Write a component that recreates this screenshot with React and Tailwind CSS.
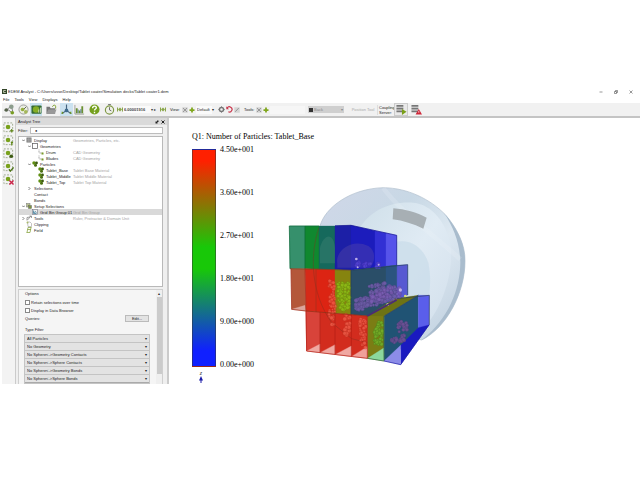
import { useState } from "react";

const MENUS = ["File", "Tools", "View", "Displays", "Help"];

const TREE = [
  { level: 0, label: "Display", note: "Geometries, Particles, etc.", icon: "grid", arrow: "open" },
  { level: 1, label: "Geometries", icon: "box", arrow: "open" },
  { level: 2, label: "Drum", note: "CAD Geometry", icon: "cad" },
  { level: 2, label: "Blades", note: "CAD Geometry", icon: "cad" },
  { level: 1, label: "Particles", icon: "particle", arrow: "open" },
  { level: 2, label: "Tablet_Base", note: "Tablet Base Material", icon: "particle" },
  { level: 2, label: "Tablet_Middle", note: "Tablet Middle Material", icon: "particle" },
  { level: 2, label: "Tablet_Top", note: "Tablet Top Material", icon: "particle" },
  { level: 1, label: "Selections", arrow: "closed" },
  { level: 1, label: "Contact" },
  { level: 1, label: "Bonds" },
  { level: 0, label: "Setup Selections", icon: "setup", arrow: "open" },
  { level: 1, label: "Grid Bin Group 01", note: "Grid Bin Group", icon: "bin", selected: true },
  { level: 0, label: "Tools", note: "Ruler, Protractor & Domain Unit", icon: "tools", arrow: "closed" },
  { level: 0, label: "Clipping", icon: "clip" },
  { level: 0, label: "Field", icon: "field" },
];

const INDENT = ["pl-px", "pl-[7px]", "pl-[13px]"];

const FILTERS = [
  "All Particles",
  "No Geometry",
  "No Sphere<->Geometry Contacts",
  "No Sphere<->Sphere Contacts",
  "No Sphere<->Geometry Bonds",
  "No Sphere<->Sphere Bonds",
];

const SCALE = ["4.50e+001", "3.60e+001", "2.70e+001", "1.80e+001", "9.00e+000", "0.00e+000"];

function TreeIcon({ name }) {
  return (
    <svg viewBox="0 0 12 12" className="size-[6px] shrink-0" fill="none" aria-hidden="true">
      {name === "grid" && (
        <>
          <rect x="1" y="1" width="10" height="10" fill="#777" />
          <path d="M1 4.5h10M1 8h10M4.5 1v10M8 1v10" stroke="#bbb" />
        </>
      )}
      {name === "box" && <rect x="1" y="1" width="10" height="10" stroke="#555" strokeWidth="1.4" />}
      {name === "cad" && (
        <>
          <path d="M2 1v7h7" stroke="#888" strokeWidth="1.4" strokeDasharray="2 1" />
          <rect x="7" y="7" width="4" height="4" fill="#7a9a2a" />
        </>
      )}
      {name === "particle" && (
        <>
          <circle cx="4" cy="4" r="3.5" fill="#5f8f10" />
          <circle cx="9" cy="4" r="2.8" fill="#3c5a10" />
          <circle cx="7" cy="8.5" r="3" fill="#4c7010" />
        </>
      )}
      {name === "setup" && (
        <>
          <rect x="1" y="1" width="7" height="7" fill="#b8c090" stroke="#777" />
          <rect x="5" y="5" width="6" height="6" fill="#7c9440" stroke="#666" />
        </>
      )}
      {name === "bin" && (
        <>
          <rect x="1" y="1" width="10" height="10" fill="#eee" stroke="#667" />
          <path d="M3 3v6h6M4 8l2-3 3 2" stroke="#2a7090" strokeWidth="1.4" />
        </>
      )}
      {name === "tools" && <path d="M2 11V5l6-1M3 10l7-8M7 2h4v4" stroke="#777" strokeWidth="1.4" />}
      {name === "clip" && (
        <>
          <path d="M3 2h5l3 3v6H4z" stroke="#888" />
          <circle cx="3" cy="3" r="2" fill="#a9b96a" />
        </>
      )}
      {name === "field" && <path d="M4 1h7M3 5h7M1 11h7M4 1L2 11M10 1L8 11" stroke="#86a23c" strokeWidth="1.5" />}
    </svg>
  );
}

function TreeRow({ item }) {
  return (
    <li className={item.selected ? "bg-[#d9d9d9]" : ""}>
      <div className="grid h-[6px] grid-cols-[54px_1fr] items-center">
        <span className={`flex items-center whitespace-nowrap ${INDENT[item.level]}`}>
          <span className="flex w-[6px] justify-center">
            {item.arrow && (
              <svg viewBox="0 0 6 6" className="size-[3px]" fill="none" stroke="#555" strokeWidth="1.5">
                <path d={item.arrow === "open" ? "M0 1l3 3 3-3" : "M1 0l3 3-3 3"} />
              </svg>
            )}
          </span>
          {item.icon && <TreeIcon name={item.icon} />}
          <span className="pl-[2px]">{item.label}</span>
        </span>
        <span className="whitespace-nowrap text-[#a3a3a3]">{item.note}</span>
      </div>
    </li>
  );
}

function IconButton({ label, className, size = "size-[11px]", children }) {
  return (
    <button type="button" aria-label={label} className={`flex h-[13px] shrink-0 items-center justify-center ${className}`}>
      <svg viewBox="0 0 24 24" className={size} fill="none">
        {children}
      </svg>
    </button>
  );
}

function ViewIcons({ name }) {
  return (
    <>
      <IconButton label={`Hide ${name}`} className="w-[7px]" size="size-[6px]">
        <rect x="1" y="1" width="22" height="22" fill="#d4d4d4" />
        <path d="M4 4l16 16M20 4L4 20" stroke="#999" strokeWidth="4" />
      </IconButton>
      <IconButton label={`Add ${name}`} className="w-[7px]" size="size-[6px]">
        <path d="M12 2v20M2 12h20" stroke="#7fa61c" strokeWidth="7" />
      </IconButton>
    </>
  );
}

function ServerIcon() {
  return (
    <>
      <path d="M1 2h15v4H1zM1 8h15v4H1zM1 14h15v4H1z" fill="#777" />
      <path d="M1 7h15M1 13h15" stroke="#aaa" />
    </>
  );
}

function FilmIcon() {
  return (
    <svg viewBox="0 0 12 10" className="h-[5px] w-[6px] shrink-0" aria-hidden="true">
      <path d="M0 1h2v8H0zM10 1h2v8h-2zM2 5l4-4v8zM10 5L6 1v8z" fill="#8aa64a" />
    </svg>
  );
}

function Toolbar() {
  return (
    <div className="flex h-[15px] items-center overflow-hidden border-b-2 border-[#c4c4c4] bg-[#f1f1f1]">
      <IconButton label="Creator" className="w-[14px]">
        <path d="M1 14l6-3 8 6M9 10l7-6 3 12" stroke="#777" strokeWidth="2" />
        <circle cx="16" cy="6" r="5" fill="#8c9c8c" />
        <circle cx="5" cy="13" r="4" fill="#55624a" />
        <circle cx="18" cy="19" r="4" fill="#789c24" />
      </IconButton>
      <IconButton label="Simulator" className="w-[14px]">
        <circle cx="12" cy="12" r="10" fill="#e9ecdf" stroke="#999" strokeWidth="2" />
        <path d="M12 12l6-6" stroke="#555" strokeWidth="2" />
        <circle cx="10" cy="12" r="4" fill="#93ad3c" />
        <circle cx="17" cy="17" r="4" fill="#a5b85a" />
      </IconButton>
      <IconButton label="Analyst" className="w-[12px] bg-[#c7e0ee]">
        <rect x="1" y="3" width="22" height="18" rx="2" fill="#356b32" />
        <circle cx="11" cy="12" r="7" fill="#83ad25" />
        <path d="M17 19V12M21 19V8" stroke="#dce7c6" strokeWidth="2" />
      </IconButton>
      <IconButton label="Open" className="w-[18px]">
        <path d="M1 21V6h7l2 3h10v12z" fill="#777" />
        <path d="M1 21l4-9h18l-4 9z" fill="#999" />
        <path d="M14 6c2-5 7-4 7-1v5" stroke="#7b9d25" strokeWidth="2" />
      </IconButton>
      <IconButton label="Vectors" className="w-[13px] bg-[#cce2f0]">
        <path d="M12 14V1M12 14L2 21M12 14l10 7" stroke="#46637d" strokeWidth="2.5" />
        <circle cx="12" cy="14" r="4" fill="#3f6a8c" />
        <path d="M1 22l1-6 4 4zM23 22l-1-6-4 4z" fill="#6b9418" />
      </IconButton>
      <IconButton label="Graphs" className="w-[13px]">
        <path d="M2 2v20h20" stroke="#999" strokeWidth="2" />
        <path d="M6 20V9M12 20V14M18 20V5" stroke="#6c9132" strokeWidth="4" />
        <path d="M9 20v-8M15 20v-9" stroke="#527b91" strokeWidth="2" />
      </IconButton>
      <IconButton label="Help" className="w-[16px]">
        <circle cx="12" cy="12" r="11" fill="#74a01d" />
        <path d="M8 9c0-6 8-5 8-1 0 3-4 3-4 6M12 17v3" stroke="#fff" strokeWidth="3" />
      </IconButton>
      <IconButton label="Timer" className="w-[15px]">
        <circle cx="12" cy="13" r="9" fill="#eef0e7" stroke="#7e9743" strokeWidth="2.5" />
        <path d="M12 13V7M9 1h6M12 13l4 2" stroke="#666" strokeWidth="2" />
      </IconButton>
      <div className="flex w-[43px] shrink-0 items-center">
        <FilmIcon />
        <input
          aria-label="Time"
          defaultValue="6.00001916"
          className="h-[7px] w-[28px] bg-[#fafafa] px-px font-bold text-[#444]"
        />
        <span className="whitespace-nowrap text-[#333]">▾ ▸</span>
      </div>
      <FilmIcon />
      <span className="ml-[4px] w-[11px] shrink-0">View:</span>
      <ViewIcons name="view" />
      <select aria-label="View" className="ml-px h-[8px] w-[16px] shrink-0 appearance-none bg-[#fafafa] px-px">
        <option>Default</option>
      </select>
      <span className="w-[6px] shrink-0">▾</span>
      <IconButton label="View settings" className="w-[7px]" size="size-[7px]">
        <circle cx="12" cy="12" r="7" stroke="#777" strokeWidth="5" />
        <path d="M12 1v5M12 18v5M1 12h5M18 12h5" stroke="#777" strokeWidth="3" />
      </IconButton>
      <IconButton label="Reset view" className="w-[8px]" size="size-[7px]">
        <path d="M4 7a9 9 0 1 1 4 13" stroke="#c8344a" strokeWidth="4" />
        <path d="M1 1v10h9z" fill="#c8344a" />
      </IconButton>
      <IconButton label="Edit view" className="w-[8px]" size="size-[6px]">
        <rect x="1" y="1" width="22" height="22" fill="#d5d5d5" />
        <path d="M5 19L19 4" stroke="#999" strokeWidth="4" />
      </IconButton>
      <span className="ml-[3px] w-[11px] shrink-0">Tools:</span>
      <ViewIcons name="tool" />
      <select aria-label="Tool" className="ml-px h-[8px] w-[35px] shrink-0 appearance-none bg-[#f6f6f6]">
        <option></option>
      </select>
      <div className="ml-[3px] flex h-[7px] w-[36px] shrink-0 items-center bg-[#cfcfcf] px-px text-[#888]">
        <span className="size-[4px] bg-[#333]"></span>
        <select aria-label="Plane" className="h-[6px] grow appearance-none px-px">
          <option>Back</option>
        </select>
        <span>▾</span>
      </div>
      <button type="button" className="ml-[7px] w-[24px] shrink-0 whitespace-nowrap text-[#aaa]">
        Position Tool
      </button>
      <p className="ml-[2px] w-[17px] shrink-0 border-l border-[#ddd] pl-px">Coupling Server:</p>
      <IconButton label="Start coupling server" className="w-[14px] border border-[#ccc] bg-[#e9e9e9]">
        <ServerIcon />
        <path d="M13 11l10 6-10 7z" fill="#7aa018" />
      </IconButton>
      <IconButton label="Coupling error" className="ml-[2px] w-[13px]">
        <ServerIcon />
        <path d="M17 11l7 12H10z" fill="#cf2638" />
        <path d="M17 15v4" stroke="#fff" strokeWidth="1.5" />
      </IconButton>
    </div>
  );
}

function SideTools() {
  const extras = [
    <path key="a" d="M19 15v8M15 19h8" stroke="#5f8718" strokeWidth="2.5" />,
    <path key="b" d="M19 14v9M17 16h5" stroke="#5f8718" strokeWidth="2.5" />,
    <circle key="c" cx="18" cy="18" r="4" fill="#3d5b13" />,
    <path key="d" d="M13 18l3 4 7-8" stroke="#4c7316" strokeWidth="3" />,
    <path key="e" d="M14 14l9 9M23 14l-9 9" stroke="#cc2348" strokeWidth="3" />,
  ];
  const names = ["Add selection", "Insert selection", "Select particles", "Apply selection", "Delete selection"];
  return (
    <aside className="w-[13px] shrink-0 bg-[#f3f3f3] pt-[3px]">
      {names.map((name, i) => (
        <IconButton key={name} label={name} className="w-[12px]">
          <rect x="2" y="2" width="19" height="19" stroke="#9aa68a" strokeWidth="2" strokeDasharray="4 3" />
          <circle cx="11" cy="11" r="5" fill="#79a21c" />
          {extras[i]}
        </IconButton>
      ))}
    </aside>
  );
}

function CheckRow({ label }) {
  const [checked, setChecked] = useState(false);
  return (
    <label className="flex h-[8px] items-center gap-px">
      <input
        type="checkbox"
        checked={checked}
        onChange={(e) => setChecked(e.target.checked)}
        className="size-[5px] appearance-none border border-[#888] bg-white checked:bg-[#555]"
      />
      {label}
    </label>
  );
}

function OptionsPanel() {
  return (
    <div className="mt-[2px] flex h-[95px] border border-b-0 border-[#cfcfcf] bg-[#f5f5f5]">
      <div className="grow pl-[6px]">
        <h2 className="h-[8px] leading-[8px]">Options</h2>
        <CheckRow label="Retain selections over time" />
        <CheckRow label="Display in Data Browser" />
        <div className="flex h-[8px] items-center justify-between pr-[7px]">
          <span>Queries:</span>
          <button type="button" className="h-[7px] w-[24px] border border-[#bbb] bg-[#e3e3e3]">
            Edit...
          </button>
        </div>
        <h2 className="mt-[4px] mb-px h-[8px] leading-[8px]">Type Filter</h2>
        <div className="flex flex-col pr-[7px]">
          {FILTERS.map((f) => (
            <div key={f} className="flex h-[8px] items-center border-b border-[#aaa] bg-[#e3e3e3] pr-[2px] shadow-[0_0_0_1px_#c4c4c4]">
              <select aria-label={f} className="h-[7px] grow appearance-none px-[2px]">
                <option>{f}</option>
              </select>
              <span>▾</span>
            </div>
          ))}
        </div>
      </div>
      <div className="flex w-[6px] flex-col items-center bg-[#efefef]">
        <span className="h-[7px] leading-[7px]">▴</span>
        <span className="h-[77px] w-[5px] bg-[#cbcbcb]"></span>
      </div>
    </div>
  );
}

function AnalystDock() {
  return (
    <section className="flex w-[154px] shrink-0 flex-col border-r-2 border-l border-[#cbcbcb] bg-[#efefef]">
      <header className="flex h-[7px] items-center justify-between bg-[#dadada] px-[2px]">
        <h1>Analyst Tree</h1>
        <span className="flex gap-[2px]">
          <button type="button" aria-label="Float">
            <svg viewBox="0 0 8 8" className="size-[4px]"><path d="M1 3h4v4H1zM4 1h3v3H4z" fill="#222" /></svg>
          </button>
          <button type="button" aria-label="Close">
            <svg viewBox="0 0 8 8" className="size-[4px]"><path d="M1 1l6 6M7 1L1 7" stroke="#222" strokeWidth="2" /></svg>
          </button>
        </span>
      </header>
      <div className="px-[2px] pr-[4px]">
        <label className="flex h-[11px] items-center gap-[2px]">
          <span className="w-[10px]">Filter:</span>
          <input defaultValue="●" className="h-[7px] w-0 grow border border-[#bdbdbd] bg-white px-[4px]" />
        </label>
        <ul className="h-[151px] border border-[#b9b9b9] bg-white">
          {TREE.map((item) => (
            <TreeRow key={item.label} item={item} />
          ))}
        </ul>
        <OptionsPanel />
      </div>
    </section>
  );
}

// repeatable scatter, so the cloud of tablets keeps its shape between renders
function scatter(count, x, y, w, h, slope, seed) {
  let s = seed;
  const next = () => {
    s = (s * 16807) % 2147483647;
    return s / 2147483647;
  };
  return Array.from({ length: count }, () => {
    const u = next();
    return { x: x + u * w, y: y + next() * h + u * slope, r: 3 + next() * 3 };
  });
}

const CLOUDS = [
  { color: "#f0604c", stroke: "#b02a1c", points: scatter(60, 147, 312, 18, 130, 10, 77) },
  { color: "#f0604c", stroke: "#b02a1c", points: scatter(30, 194, 410, 18, 65, 10, 91) },
  { color: "#f0604c", stroke: "#b02a1c", points: scatter(45, 240, 425, 18, 80, 10, 17) },
  { color: "#8fc818", stroke: "#5b8410", points: scatter(85, 174, 318, 35, 85, 0, 31) },
  { color: "#6fb82c", stroke: "#3f7a1a", points: scatter(50, 284, 435, 24, 70, 5, 53) },
  { color: "#8060b8", stroke: "#5c4088", points: scatter(170, 226, 372, 134, 36, -45, 11) },
  { color: "#8060b8", stroke: "#5c4088", points: scatter(75, 268, 330, 68, 50, -20, 23) },
  { color: "#80509c", stroke: "#5a3a78", points: scatter(26, 336, 485, 38, 18, -8, 41) },
  { color: "#80509c", stroke: "#5a3a78", points: scatter(22, 355, 436, 26, 32, 0, 63) },
  { color: "#5a48d8", stroke: "#3a28a0", points: scatter(20, 230, 258, 70, 12, 5, 29) },
];

const FACES = [
  // back layer
  ["28,150 75,150 75,278 30,278", "#36906c"],
  ["75,150 117,150 117,280 75,278", "#10882f"],
  ["117,150 165,150 165,281 117,280", "#15695c"],
  ["165,150 213,148 213,283 165,281", "#1c1fa6"],
  ["213,148 285,164 285,276 213,283", "#1c1cbc"],
  ["285,164 318,171 318,272 285,276", "#3230d4"],
  ["318,171 350,178 350,268 318,272", "#5653ea"],
  // middle layer
  ["33,278 75,278 78,405 35,400", "#b4573a"],
  ["35,400 75,388 78,404", "#dba59c"],
  ["75,278 165,281 165,412 78,405", "#d62a18"],
  ["108,280 165,281 165,412 108,408", "#dc2413"],
  ["165,281 213,283 213,416 165,412", "#86840f"],
  ["213,283 350,268 350,372 262,420 213,416", "#2a4e68"],
  ["350,268 383,266 383,357 350,374", "#5759d2"],
  ["318,271 350,268 350,374 318,390", "#2b5480"],
  // front layer
  ["78,405 262,420 262,547 80,525", "#d22c1e"],
  ["78,405 120,408 120,506 80,525", "#d8433a"],
  ["262,420 345,368 415,358 313,420", "#6d7314"],
  ["262,420 313,420 312,555 262,547", "#7b7d14"],
  ["313,420 415,358 415,476 362,520 312,555", "#205374"],
  ["415,358 448,358 447,447 415,476", "#5a5eea"],
  ["447,447 362,566 362,508 415,455", "#1a1ac0"],
  // floor of each bin
  ["80,525 120,504 120,530", "#f0a8a2"],
  ["120,530 165,506 165,536", "#f0a8a2"],
  ["165,536 214,510 214,542", "#f0a8a2"],
  ["214,542 262,512 262,547", "#f0a09a"],
  ["263,547 311,516 312,555", "#8cd89c"],
  ["312,555 362,508 362,566", "#8c8ce8"],
];

function DrumScene() {
  return (
    <svg viewBox="0 0 600 600" className="mt-[31px] size-[200px] shrink-0 self-start" role="img" aria-label="Drum with grid bins">
      <defs>
        <linearGradient id="drum" x1="0" y1="0" x2="1" y2="1">
          <stop offset="0" stopColor="#d0d7e8" />
          <stop offset="0.35" stopColor="#c8d8e5" />
          <stop offset="0.6" stopColor="#dde8f1" />
          <stop offset="1" stopColor="#bccddd" />
        </linearGradient>
        <linearGradient id="face" x1="0" y1="0" x2="1" y2="1">
          <stop offset="0" stopColor="#cfdfe9" />
          <stop offset="0.5" stopColor="#e0ebf4" />
          <stop offset="1" stopColor="#d3e0ec" />
        </linearGradient>
      </defs>
      <path
        d="M120 150C135 95 210 38 310 35C385 36 450 70 495 115C530 155 556 205 555 255C555 350 500 455 425 492L200 440Z"
        fill="url(#drum)"
        stroke="#aebdcc"
        strokeWidth="2"
      />
      <path d="M495 115C530 155 556 205 555 255C555 350 500 455 425 492C505 430 540 340 541 260C540 200 520 155 495 115Z" fill="#a9bccd" />
      <path d="M240 155C270 105 330 75 400 80C455 85 500 140 512 210C522 300 480 400 440 445L240 400Z" fill="url(#face)" />
      <path d="M340 200C390 185 430 215 445 260C455 310 450 350 440 400L330 380Z" fill="#c9dcea" opacity="0.75" />
      <path d="M310 36C355 100 440 160 541 250" stroke="#eef4f8" strokeWidth="14" fill="none" opacity="0.2" />
      <path d="M340 97C375 99 410 110 440 125L430 158C400 144 370 134 338 130Z" fill="#a7afb4" />

      {FACES.map(([points, fill]) => (
        <polygon key={points} points={points} fill={fill} stroke={fill} strokeWidth="1" />
      ))}
      <path d="M117 155C90 230 90 350 155 440L215 488L262 500" stroke="#7c3020" strokeWidth="3" fill="none" opacity="0.4" />
      <path d="M120 215C130 175 160 165 165 215V262H120Z" fill="#4a8a78" opacity="0.35" />
      <path d="M172 262C165 225 215 185 265 210C290 225 285 262 270 275H172Z" fill="#5b4aa8" opacity="0.4" />

      {CLOUDS.map((cloud, i) => (
        <g key={i} fill={cloud.color} stroke={cloud.stroke} strokeWidth="1" opacity="0.75">
          {cloud.points.map((p, j) => (
            <circle key={j} cx={p.x} cy={p.y} r={p.r} />
          ))}
        </g>
      ))}
      <g fill="#bcaee8">
        <circle cx="229" cy="249" r="4" />
        <circle cx="233" cy="274" r="3" />
        <circle cx="296" cy="266" r="3" />
        <circle cx="361" cy="342" r="5" />
        <circle cx="323" cy="386" r="4" fill="#e4e890" />
        <circle cx="376" cy="360" r="4" fill="#d8e070" />
      </g>

      <g fill="none" strokeWidth="2">
        <path d="M28 150H117M30 278L28 150M75 150V278" stroke="#0d6a3a" />
        <path d="M165 149L213 148L350 178V268" stroke="#12128c" />
        <path d="M30 278L165 281L213 283" stroke="#6c4620" />
        <path d="M33 278L35 400L78 405M75 278L78 405M108 280V408" stroke="#a13020" />
        <path d="M213 283L383 266V357M213 283V416" stroke="#22405c" />
        <path d="M78 405L262 420" stroke="#8a2c10" />
        <path d="M78 405L80 525L262 547M120 408V530M165 412V536M214 416V542M262 420V547" stroke="#b01c12" />
        <path d="M262 420L350 372" stroke="#4a2a78" strokeWidth="5" />
        <path d="M350 368L448 358V447M313 420L415 358" stroke="#2c3c58" />
        <path d="M262 547L312 555V420" stroke="#2a6040" />
        <path d="M312 555L362 566L447 447" stroke="#1414a0" />
      </g>
    </svg>
  );
}

function Viewport() {
  return (
    <main className="grow overflow-hidden bg-white pt-[15px] pl-[23px] font-['Liberation_Serif',serif] text-[8px] leading-[8px] text-black">
      <h2>Q1: Number of Particles: Tablet_Base</h2>
      <div className="mt-[4px] flex h-[225px] items-center">
        <div className="h-[218px] w-[24px] shrink-0 border border-[#333]/50 bg-[linear-gradient(to_bottom,#ff2000_0%,#ff2000_5%,#18c808_45%,#18c808_55%,#1020ff_93%)]"></div>
        <ol className="ml-[4px] flex h-[224px] w-[36px] shrink-0 flex-col justify-between">
          {SCALE.map((v) => (
            <li key={v}>{v}</li>
          ))}
        </ol>
        <div className="ml-[24px] self-start">
          <DrumScene />
        </div>
      </div>
      <div className="flex w-[18px] flex-col items-center text-[6px] leading-[6px] text-[#333] italic">
        <span>z</span>
        <svg viewBox="0 0 8 14" className="h-[7px] w-[4px]" fill="#1a1aa8">
          <path d="M3 14V9H0l4-9 4 9H5v5z" />
        </svg>
      </div>
    </main>
  );
}

export default function App() {
  return (
    <div className="min-h-screen bg-white pt-[88px] pl-[2px] font-['Liberation_Sans',sans-serif] text-[4px] leading-[5px] text-[#222]">
      <header className="flex h-[7px] items-center justify-between pr-[7px]">
        <div className="flex items-center gap-px">
          <svg viewBox="0 0 12 12" className="size-[5px]" aria-hidden="true">
            <rect width="12" height="12" fill="#34462a" />
            <path d="M3 3h6v2H5v2h4v2H3z" fill="#dfe8d0" />
          </svg>
          <span>EDEM Analyst - C:/Users/usse/Desktop/Tablet coater/Simulation decks/Tablet coater1.dem</span>
        </div>
        <div className="flex gap-[11px]">
          <button type="button" aria-label="Minimize">
            <svg viewBox="0 0 8 8" className="size-[4px]" stroke="#333"><path d="M1 4h6" /></svg>
          </button>
          <button type="button" aria-label="Restore">
            <svg viewBox="0 0 8 8" className="size-[4px]" stroke="#333" fill="none"><path d="M1 3h4v4H1zM3 3V1h4v4H5" /></svg>
          </button>
          <button type="button" aria-label="Close window">
            <svg viewBox="0 0 8 8" className="size-[4px]" stroke="#333"><path d="M1 1l6 6M7 1L1 7" /></svg>
          </button>
        </div>
      </header>
      <nav className="flex h-[8px] items-center gap-[5px] pl-px">
        {MENUS.map((m) => (
          <button key={m} type="button">{m}</button>
        ))}
      </nav>
      <Toolbar />
      <div className="flex h-[266px] overflow-hidden">
        <SideTools />
        <AnalystDock />
        <Viewport />
      </div>
    </div>
  );
}
